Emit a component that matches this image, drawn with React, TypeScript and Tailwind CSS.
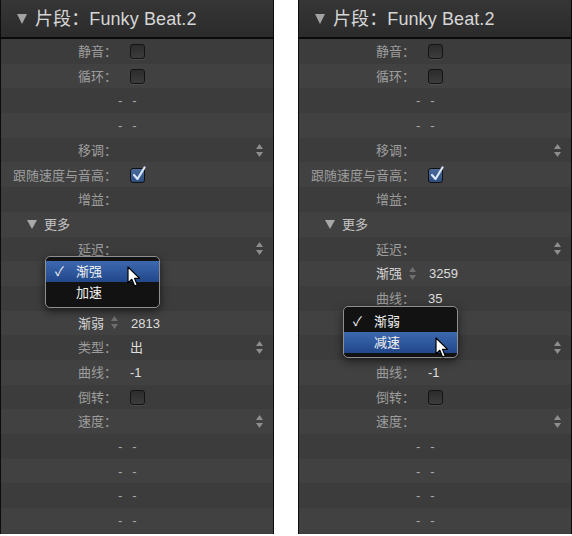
import React from "react";

const FONT = "font-['Liberation_Sans','Noto_Sans_CJK_SC',sans-serif]";

function Stepper({ color = "#8e8e8e" }: { color?: string }) {
  return (
    <svg width="7" height="13" viewBox="0 0 7 13">
      <polygon points="3.5,0 7,5 0,5" fill={color} />
      <polygon points="0,8 7,8 3.5,13" fill={color} />
    </svg>
  );
}

function Checkbox({ checked }: { checked?: boolean }) {
  if (checked) {
    return (
      <div className="relative w-[15px] h-[15px] rounded-[3px] border border-[#111] bg-gradient-to-b from-[#4a6a9c] to-[#2f4e80]">
        <svg className="absolute left-[1px] top-[-3px]" width="14" height="16" viewBox="0 0 14 16">
          <path d="M2 9 L5.5 13 L12.5 1.5" stroke="#d8e6ff" strokeWidth="2.2" fill="none" strokeLinecap="round" strokeLinejoin="round" />
        </svg>
      </div>
    );
  }
  return (
    <div className="w-[15px] h-[15px] rounded-[3px] border border-[#141414] bg-gradient-to-b from-[#2c2c2c] to-[#3c3c3c] shadow-[0_1px_0_rgba(255,255,255,0.08)]" />
  );
}

function Cursor() {
  return (
    <svg width="14" height="22" viewBox="0 0 14 22">
      <path d="M1 1 L1 17 L4.8 13.3 L7.6 20 L10.3 18.9 L7.6 12.4 L12.6 12.4 Z" fill="#fff" stroke="#000" strokeWidth="1.2" strokeLinejoin="round" />
    </svg>
  );
}

type RowSpec =
  | { k: "label"; label: string; cb?: "on" | "off"; value?: string; step?: boolean }
  | { k: "dash" }
  | { k: "more" }
  | { k: "empty"; step?: boolean }
  | { k: "pop"; label: string; value: string };

function Row({ spec, idx }: { spec: RowSpec; idx: number }) {
  const bg = idx % 2 === 0 ? "bg-[#3c3c3c]" : "bg-[#414141]";
  let inner: React.ReactNode = null;
  if (spec.k === "label") {
    inner = (
      <>
        <div className="w-[116px] text-right text-[13px] text-[#9d9d9d] whitespace-nowrap pt-[1px]">{spec.label}：</div>
        <div className="ml-[13px] flex items-center text-[13px] text-[#dedede] pt-[1px]">
          {spec.cb === "on" && <Checkbox checked />}
          {spec.cb === "off" && <Checkbox />}
          {spec.value && <span>{spec.value}</span>}
        </div>
        {spec.step && (
          <div className="ml-auto mr-[10px] flex items-center">
            <Stepper />
          </div>
        )}
      </>
    );
  } else if (spec.k === "dash") {
    inner = (
      <div className="ml-[117px] flex items-center gap-[10px] text-[13px] text-[#aaaaaa] pt-[1px]">
        <span>-</span>
        <span>-</span>
      </div>
    );
  } else if (spec.k === "more") {
    inner = (
      <div className="ml-[26px] flex items-center gap-[7px] pt-[1px]">
        <svg width="10" height="9" viewBox="0 0 10 9">
          <polygon points="0,0 10,0 5,9" fill="#a8a8a8" />
        </svg>
        <span className="text-[13px] text-[#c4c4c4]">更多</span>
      </div>
    );
  } else if (spec.k === "pop") {
    inner = (
      <>
        <div className="w-[103px] text-right text-[13px] text-[#d4d4d4] pt-[1px]">{spec.label}</div>
        <div className="ml-[7px] flex items-center">
          <Stepper color="#6f6f6f" />
        </div>
        <div className="ml-[13px] text-[13px] text-[#dedede] pt-[1px]">{spec.value}</div>
      </>
    );
  } else if (spec.k === "empty") {
    inner = spec.step ? (
      <div className="ml-auto mr-[10px] flex items-center">
        <Stepper />
      </div>
    ) : null;
  }
  return <div className={`h-[24.7px] flex items-center ${bg}`}>{inner}</div>;
}

function Popup({ items, sel }: { items: string[]; sel: number }) {
  return (
    <div className="w-[115px] rounded-[5px] border border-[#8f8f8f] bg-[#121212] pt-[4px] pb-[4px] shadow-[0_3px_8px_rgba(0,0,0,0.6)]">
      {items.map((t, i) => (
        <div
          key={t}
          className={`h-[21px] flex items-center text-[13px] text-[#f2f2f2] ${
            i === sel ? "bg-gradient-to-b from-[#3d69b0] to-[#22478a]" : ""
          }`}
        >
          <div className="w-[30px] pl-[9px] text-[13px]">{i === 0 ? "✓" : ""}</div>
          <span>{t}</span>
        </div>
      ))}
    </div>
  );
}

function Panel({ rows, popup, popupTop, cursor }: { rows: RowSpec[]; popup: React.ReactNode; popupTop: number; cursor: { x: number; y: number } }) {
  return (
    <div className={`relative w-[274px] h-[534px] border-l border-r border-[#0c0c0c] bg-[#3c3c3c] ${FONT}`}>
      <div className="h-[39px] border-b-2 border-[#0a0a0a] bg-gradient-to-b from-[#363636] to-[#2b2b2b] flex items-center">
        <svg className="ml-[16px]" width="10" height="10" viewBox="0 0 10 10">
          <polygon points="0,0 10,0 5,10" fill="#a3a3a3" />
        </svg>
        <span className="ml-[8px] text-[18px] text-[#d6d6d6] tracking-[0.1px] pt-[1px]">片段：Funky Beat.2</span>
      </div>
      {rows.map((r, i) => (
        <Row key={i} spec={r} idx={i} />
      ))}
      <div className="absolute left-[44px]" style={{ top: popupTop }}>
        {popup}
      </div>
      <div className="absolute" style={{ left: cursor.x, top: cursor.y }}>
        <Cursor />
      </div>
    </div>
  );
}

export default function App() {
  const common1: RowSpec[] = [
    { k: "label", label: "静音", cb: "off" },
    { k: "label", label: "循环", cb: "off" },
    { k: "dash" },
    { k: "dash" },
    { k: "label", label: "移调", step: true },
    { k: "label", label: "跟随速度与音高", cb: "on" },
    { k: "label", label: "增益" },
    { k: "more" },
    { k: "label", label: "延迟", step: true },
  ];
  const tail: RowSpec[] = [
    { k: "label", label: "曲线", value: "-1" },
    { k: "label", label: "倒转", cb: "off" },
    { k: "label", label: "速度", step: true },
    { k: "dash" },
    { k: "dash" },
    { k: "dash" },
    { k: "dash" },
  ];
  const leftRows: RowSpec[] = [
    ...common1,
    { k: "empty" },
    { k: "empty" },
    { k: "pop", label: "渐弱", value: "2813" },
    { k: "label", label: "类型", value: "出", step: true },
    ...tail,
  ];
  const rightRows: RowSpec[] = [
    ...common1,
    { k: "pop", label: "渐强", value: "3259" },
    { k: "label", label: "曲线", value: "35" },
    { k: "empty" },
    { k: "empty", step: true },
    ...tail,
  ];
  return (
    <div className="w-[572px] h-[536px] bg-white flex gap-[24px]">
      <Panel rows={leftRows} popupTop={256} popup={<Popup items={["渐强", "加速"]} sel={0} />} cursor={{ x: 126, y: 266 }} />
      <Panel rows={rightRows} popupTop={306} popup={<Popup items={["渐弱", "减速"]} sel={1} />} cursor={{ x: 136, y: 337 }} />
    </div>
  );
}
